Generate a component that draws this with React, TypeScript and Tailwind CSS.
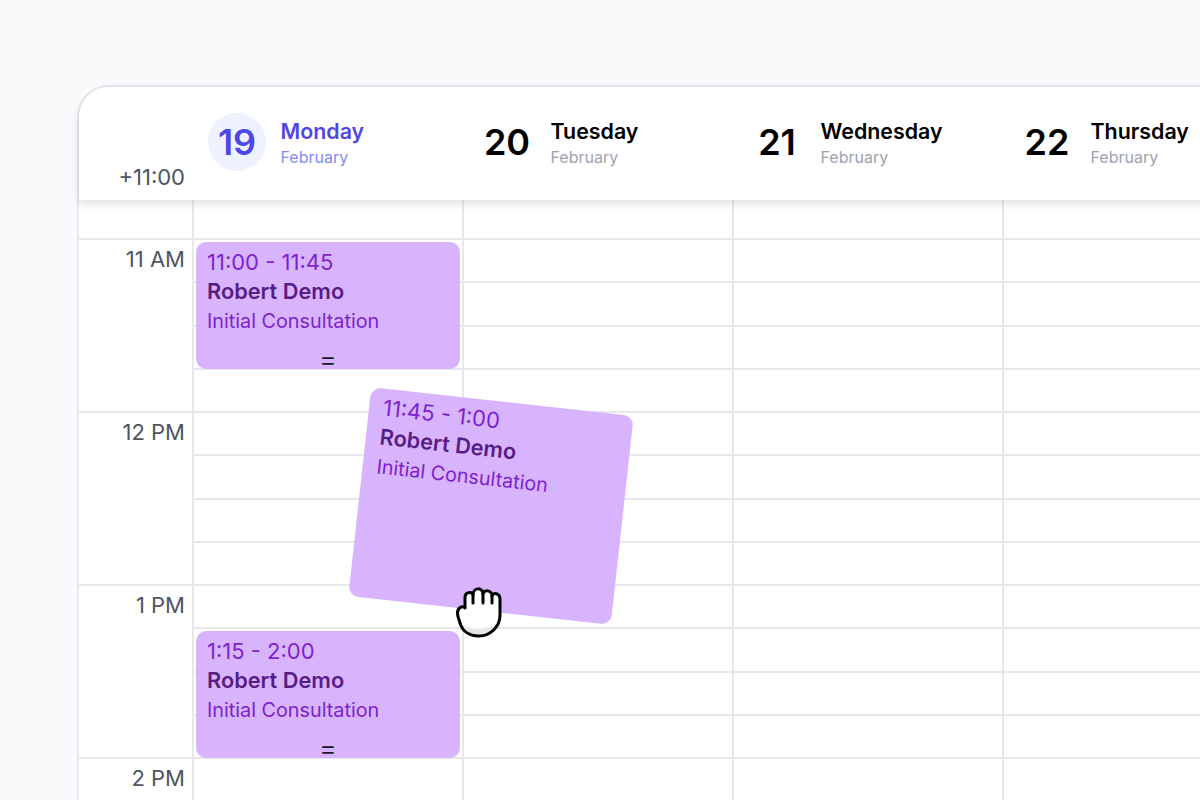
const days = [
  { num: "19", name: "Monday", active: true },
  { num: "20", name: "Tuesday", active: false },
  { num: "21", name: "Wednesday", active: false },
  { num: "22", name: "Thursday", active: false },
]

const hours = ["11 AM", "12 PM", "1 PM", "2 PM"]

function EventCard({ time, dragging = false }: { time: string; dragging?: boolean }) {
  return (
    <div className={`relative h-full rounded-[10px] bg-[#d8b4fe] ${dragging ? "pl-[14px] pt-[4.5px]" : "pl-[11px] pt-[5.5px]"}`}>
      <p className="text-[22px] leading-[29px] text-[#7e22ce]">{time}</p>
      <p className="text-[21.75px] font-semibold leading-[29px] text-[#581c87]">Robert Demo</p>
      <p className="text-[19.8px] leading-[31px] text-[#7e22ce]">Initial Consultation</p>
      {!dragging && (
        <span className="absolute bottom-[-5px] left-0 right-0 text-center text-[28px] font-light leading-[30px] text-[#111827]">=</span>
      )}
    </div>
  )
}

function DayColumn({ children }: { children?: React.ReactNode }) {
  return (
    <div className="relative w-[270px] shrink-0 border-r-2 border-[#e7e8ee]">
      <div className="h-[40px] border-b-2 border-[#e7e8ee]" />
      {Array.from({ length: 14 }).map((_, i) => (
        <div key={i} className="h-[43.25px] border-b-2 border-[#e7e8ee]" />
      ))}
      {children}
    </div>
  )
}

export default function App() {
  return (
    <div className="relative h-[800px] w-[1200px] overflow-hidden bg-[#f9fafb] pl-[77px] pt-[85px] font-['Inter',sans-serif]">
      <div className="w-[1200px] rounded-tl-[32px] border-l-2 border-t-2 border-[#e7e8ee] bg-white">
        <div className="relative z-10 flex h-[113px] rounded-tl-[30px] bg-white shadow-[0_4px_8px_rgba(0,0,0,0.12)]">
          <div className="flex w-[116px] shrink-0 items-end justify-end pb-[9px] pr-[10px] text-[22px] leading-[28px] text-[#4b5563]">
            +11:00
          </div>
          {days.map((day) => (
            <div key={day.num} className="flex w-[270px] shrink-0 items-start pt-[26px]">
              <div
                className={`ml-[13px] mr-[14.5px] flex h-[58px] w-[58px] shrink-0 items-center justify-center rounded-full text-[36px] font-semibold ${
                  day.active ? "bg-[#eef2ff] text-[#4f46e5]" : "text-black"
                }`}
              >
                {day.num}
              </div>
              <div className="pt-[3.5px]">
                <p className={`text-[21.4px] font-semibold leading-[28px] ${day.active ? "text-[#4f46e5]" : "text-black"}`}>
                  {day.name}
                </p>
                <p className={`mt-[0.5px] text-[16px] leading-[24px] ${day.active ? "text-[#818cf8]" : "text-[#9ca3af]"}`}>February</p>
              </div>
            </div>
          ))}
        </div>

        <div className="flex">
          <div className="w-[115px] shrink-0 border-r-2 border-[#e7e8ee] text-[#4b5563]">
            <div className="h-[40px] border-b-2 border-[#e7e8ee]" />
            {hours.map((hour) => (
              <div key={hour} className="h-[173px] border-b-2 border-[#e7e8ee] pr-[7px] pt-[5px] text-right text-[22px] leading-[28px]">
                {hour}
              </div>
            ))}
          </div>
          <DayColumn>
            <div className="absolute left-[2px] top-[42px] h-[127px] w-[264px]">
              <EventCard time="11:00 - 11:45" />
            </div>
            <div className="absolute left-[2px] top-[431px] h-[127px] w-[264px]">
              <EventCard time="1:15 - 2:00" />
            </div>
          </DayColumn>
          <DayColumn />
          <DayColumn />
          <DayColumn />
        </div>
      </div>

      <div className="absolute left-[358.5px] top-[400.5px] z-20 h-[210px] w-[264px] rotate-[6.3deg]">
        <EventCard time="11:45 - 1:00" dragging />
      </div>

      <svg className="absolute left-[440px] top-[575px] z-30" width="80" height="70" viewBox="0 0 80 70" fill="none">
        <path
          d="M25 31V22C25 17 32 16 33 20C33 12 43 12 43 19C44 14 52 15 52 21C53 17 60 18 60 24V40C60 52 50 61 39 61C28 61 22 55 20 48C19 44 17.500 42 17.500 38C17.500 33 22 30 25 33Z"
          fill="white"
        />
        <path d="M23 50C30 55 50 55 57 48C54 56 47 60 39 60C32 60 26 56 23 50Z" fill="#e5e7eb" />
        <path
          d="M25 31V22C25 17 32 16 33 20C33 12 43 12 43 19C44 14 52 15 52 21C53 17 60 18 60 24V40C60 52 50 61 39 61C28 61 22 55 20 48C19 44 17.500 42 17.500 38C17.500 33 22 30 25 33Z"
          stroke="black"
          strokeWidth="3"
          strokeLinejoin="round"
        />
        <path d="M33 20V28M43 19V28M52 21V28" stroke="black" strokeWidth="3" strokeLinecap="round" />
      </svg>
    </div>
  )
}
